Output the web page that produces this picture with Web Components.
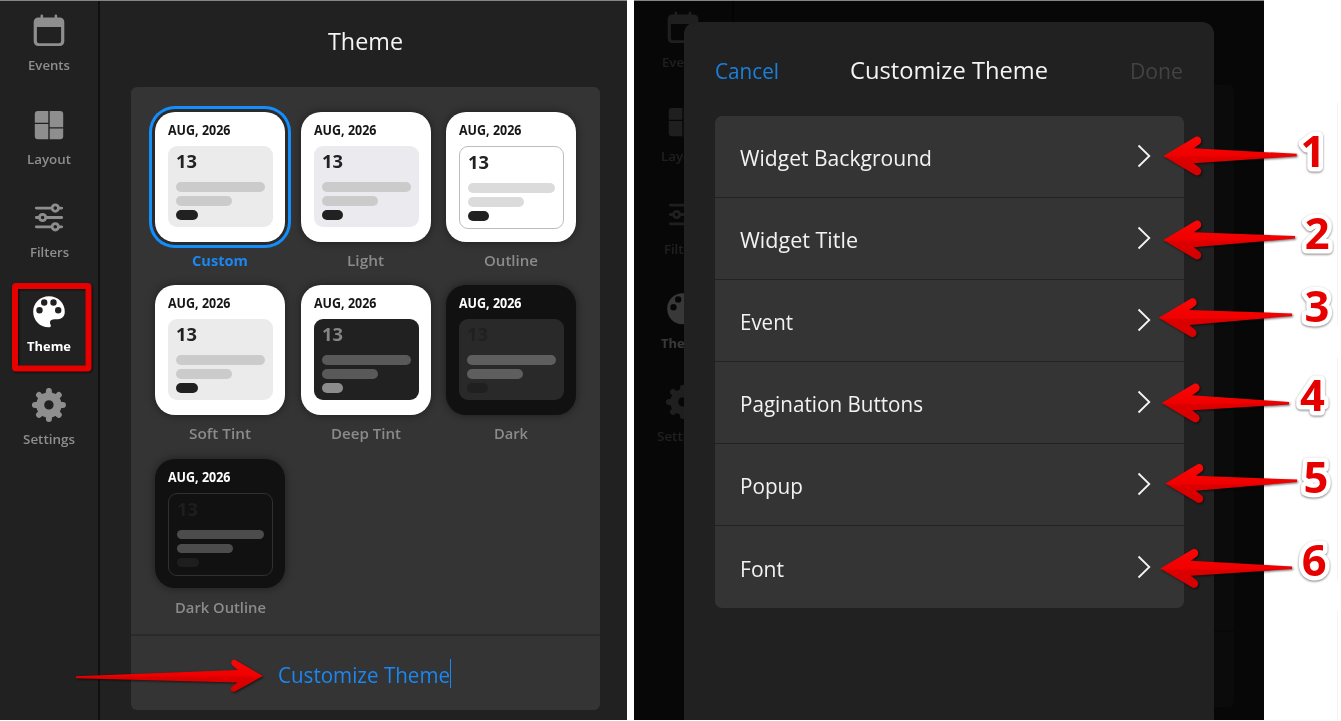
<!DOCTYPE html>
<html lang="en">
<head>
<meta charset="utf-8">
<title>Customize Theme</title>
<style>
  body {
    margin: 0;
    width: 1341px;
    height: 721px;
    overflow: hidden;
    background: #fff;
    font-family: "Open Sans", "Noto Sans", sans-serif;
  }
</style>
</head>
<body>
<guide-page></guide-page>

<script>
const ICONS = {
  events: `
    <path fill="currentColor" fill-rule="evenodd" d="M6.2 3.5H27.8a4.5 4.5 0 0 1 4.5 4.5V27.5a4.5 4.5 0 0 1-4.5 4.5H6.2a4.5 4.5 0 0 1-4.5-4.5V8a4.5 4.5 0 0 1 4.5-4.5zM4.9 12.9V27a2.2 2.2 0 0 0 2.2 2.2H26.9a2.2 2.2 0 0 0 2.2-2.2V12.9z"/>
    <path stroke="currentColor" stroke-width="2.6" stroke-linecap="round" d="M9.8 1.8V5M23.9 1.8V5"/>`,
  layout: `
    <g fill="currentColor">
      <path d="M5.8 3H16.3V14.8H2.8V6a3 3 0 0 1 3-3z"/>
      <path d="M2.8 16.1H16.3V31.2H5.8a3 3 0 0 1-3-3z"/>
      <path d="M17.7 3H28.2a3 3 0 0 1 3 3V19.2H17.7z"/>
      <path d="M17.7 20.5H31.2V28.2a3 3 0 0 1-3 3H17.7z"/>
    </g>`,
  filters: `
    <g fill="none" stroke="currentColor" stroke-width="2.8" stroke-linecap="round">
      <path d="M4.3 7.1H19.5M27 7.1H29.7M4.3 16.5H7M14 16.5H29.7M4.3 25.8H19.5M27 25.8H29.7"/>
      <circle cx="23.3" cy="7.1" r="3.2"/>
      <circle cx="10.6" cy="16.5" r="3.2"/>
      <circle cx="23.3" cy="25.8" r="3.2"/>
    </g>`,
  theme: `
    <path fill="currentColor" fill-rule="evenodd" d="M17 1.2C8 1.2 1.2 8 1.2 16.7S8 32.2 16.5 32.2c1.4 0 2.3-.3 2.4-1.2.1-1-1.2-2.2-.9-4 .3-1.800 2-2.8 4.5-2.8h3.3c3.8 0 7-2.8 7-7.5C32.8 8 26 1.2 17 1.2zM7.5 12a3.2 3.2 0 1 1 0 6.4 3.2 3.2 0 0 1 0-6.4zM12.2 4.3a3.2 3.2 0 1 1 0 6.4 3.2 3.2 0 0 1 0-6.4zM21.5 4.3a3.2 3.2 0 1 1 0 6.4 3.2 3.2 0 0 1 0-6.4zM26.2 12a3.2 3.2 0 1 1 0 6.4 3.2 3.2 0 0 1 0-6.4z"/>`,
  settings: `
    <g fill="none" stroke="currentColor" transform="translate(16.9 16.9)">
      <circle r="8.7" stroke-width="8"/>
      <path stroke-width="6" stroke-linecap="round" d="M0-11V-14M0 11V14M-11 0H-14M11 0H14M8-8L9.9-9.9M-8-8L-9.9-9.9M8 8L9.9 9.9M-8 8L-9.9 9.9"/>
    </g>`,
};

// Text squeezed or stretched to the width attribute
class FitText extends HTMLElement {
  constructor() {
    super();
    this.attachShadow({ mode: "open" });
    this.shadowRoot.innerHTML = `
      <style>
        :host { display: inline-block; white-space: nowrap; text-align: left; }
        span { display: inline-block; transform-origin: 0 50%; }
      </style>
      <span><slot></slot></span>`;
  }

  connectedCallback() {
    const width = Number(this.getAttribute("width"));
    const span = this.shadowRoot.querySelector("span");
    this.style.width = width + "px";
    const natural = span.getBoundingClientRect().width;
    if (natural) {
      span.style.transform = `scaleX(${width / natural})`;
    }
  }
}

class NavItem extends HTMLElement {
  constructor() {
    super();
    this.attachShadow({ mode: "open" });
  }

  connectedCallback() {
    this.shadowRoot.innerHTML = `
      <style>
        :host {
          display: flex;
          flex-direction: column;
          align-items: center;
          height: 93.6px;
          color: #8e8e8e;
          font-size: 13px;
          font-weight: 600;
          line-height: 20px;
        }
        :host([active]) { color: #fff; font-weight: 700; }
        svg { flex: none; width: 34px; height: 34px; margin-bottom: 7px; }
      </style>
      <svg viewBox="0 0 34 34">${ICONS[this.getAttribute("icon")]}</svg>
      <fit-text width="${this.getAttribute("width")}">${this.getAttribute("label")}</fit-text>`;
  }
}

class NavRail extends HTMLElement {
  constructor() {
    super();
    this.attachShadow({ mode: "open" });
    this.shadowRoot.innerHTML = `
      <style>
        :host {
          display: block;
          box-sizing: border-box;
          width: 100px;
          padding: 13px 0 0;
          border-right: 2px solid #101010;
        }
      </style>
      <nav-item icon="events" label="Events" width="42"></nav-item>
      <nav-item icon="layout" label="Layout" width="44"></nav-item>
      <nav-item icon="filters" label="Filters" width="39"></nav-item>
      <nav-item icon="theme" label="Theme" width="44" active></nav-item>
      <nav-item icon="settings" label="Settings" width="52"></nav-item>`;
  }
}

class ThemeTile extends HTMLElement {
  constructor() {
    super();
    this.attachShadow({ mode: "open" });
    this.shadowRoot.innerHTML = `
      <style>
        :host {
          --tile: #fff;
          --title: #161616;
          --box: #ebebeb;
          --edge: transparent;
          --day: #222;
          --bar: #cbcbcb;
          --pill: #212121;
          display: flex;
          flex-direction: column;
          align-items: center;
          width: 130px;
          color: #8b8b8b;
          font-size: 14.7px;
          font-weight: 600;
          line-height: 20px;
        }
        :host([kind="light"]) { --box: #ebebef; }
        :host([kind="outline"]) { --box: #fff; --edge: #bdbdbd; --bar: #dbdbdb; }
        :host([kind="deep"]) { --box: #212121; --day: #858585; --bar: #595959; --pill: #8c8c8c; }
        :host([kind="dark"]) { --tile: #111; --title: #fff; --box: #292929; --day: #202020; --bar: #5e5e5e; --pill: #202020; }
        :host([kind="dark-outline"]) { --tile: #111; --title: #fff; --box: #111; --edge: #303030; --day: #1e1e1e; --bar: #4c4c4c; --pill: #1e1e1e; }
        .tile {
          box-sizing: border-box;
          width: 130px;
          height: 129.5px;
          padding: 8px 12.5px 0 13px;
          border-radius: 20px;
          background: var(--tile);
          box-shadow: 0 0 8px rgba(0, 0, 0, .45);
        }
        :host([selected]) .tile { box-shadow: 0 0 0 3px #2b2b2b, 0 0 0 6px #158dfb; }
        .month { height: 26px; color: var(--title); font-size: 13.4px; font-weight: 700; line-height: 20px; }
        .box {
          box-sizing: border-box;
          width: 105px;
          height: 81px;
          padding: 4px 8px 0;
          border-radius: 9px;
          background: var(--box);
        }
        :host([kind$="outline"]) .box { height: 83px; border: 1px solid var(--edge); }
        .day { height: 32px; color: var(--day); font-size: 17.5px; font-weight: 700; line-height: 22px; }
        .bar { height: 9.5px; border-radius: 5px; background: var(--bar); margin-bottom: 4.5px; }
        .half { width: 56px; }
        .pill { width: 21.5px; background: var(--pill); }
        .label { margin-top: 8.5px; }
        :host([selected]) .label { color: #1a87f2; font-weight: 700; }
      </style>
      <div class="tile">
        <div class="month"><fit-text width="62.5">AUG, 2026</fit-text></div>
        <div class="box">
          <div class="day"><fit-text width="21">13</fit-text></div>
          <div class="bar"></div>
          <div class="bar half"></div>
          <div class="bar pill"></div>
        </div>
      </div>
      <div class="label"><slot></slot></div>`;
  }
}

class ThemePicker extends HTMLElement {
  constructor() {
    super();
    this.attachShadow({ mode: "open" });
    this.shadowRoot.innerHTML = `
      <style>
        :host { display: flex; flex-direction: column; flex: 1; padding: 23px 27px 10px 31px; }
        h1 { margin: 0; height: 63px; text-align: center; color: #f4f4f4; font-size: 23.5px; font-weight: 400; line-height: 35px; }
        .card {
          display: flex;
          flex-direction: column;
          flex: 1;
          border-radius: 6px;
          background: #343434;
        }
        .grid {
          display: grid;
          grid-template-columns: repeat(3, 130px);
          grid-auto-rows: 173.3px;
          column-gap: 15.3px;
          height: 522px;
          padding: 25px 0 0 24.3px;
        }
        .link {
          display: flex;
          align-items: center;
          justify-content: center;
          flex: 1;
          padding: 1px 2px 0 0;
          border-top: 2px solid #2a2a2a;
          color: #1a87f2;
          font-size: 22px;
        }
        .caret { width: 1px; height: 29px; background: #1a87f2; }
      </style>
      <h1><fit-text width="75">Theme</fit-text></h1>
      <div class="card">
        <div class="grid">
          <theme-tile selected><fit-text width="56">Custom</fit-text></theme-tile>
          <theme-tile kind="light"><fit-text width="37">Light</fit-text></theme-tile>
          <theme-tile kind="outline"><fit-text width="54">Outline</fit-text></theme-tile>
          <theme-tile><fit-text width="62">Soft Tint</fit-text></theme-tile>
          <theme-tile kind="deep"><fit-text width="70">Deep Tint</fit-text></theme-tile>
          <theme-tile kind="dark"><fit-text width="34">Dark</fit-text></theme-tile>
          <theme-tile kind="dark-outline"><fit-text width="91">Dark Outline</fit-text></theme-tile>
        </div>
        <div class="link"><fit-text width="172">Customize Theme</fit-text><span class="caret"></span></div>
      </div>`;
  }
}

class OptionRow extends HTMLElement {
  constructor() {
    super();
    this.attachShadow({ mode: "open" });
    this.shadowRoot.innerHTML = `
      <style>
        :host {
          display: flex;
          align-items: center;
          justify-content: space-between;
          box-sizing: border-box;
          height: 82.1px;
          padding: 2px 33px 0 24.5px;
          border-bottom: 1.5px solid #222;
          color: #f2f2f2;
          font-size: 22px;
          line-height: 30px;
        }
        :host(:last-of-type) { border-bottom-color: transparent; }
        svg { width: 14px; height: 24px; margin-bottom: 2px; }
      </style>
      <slot></slot>
      <svg viewBox="0 0 14 24"><path d="M1.5 1.5L12.3 12L1.5 22.5" fill="none" stroke="#f4f4f4" stroke-width="1.8"/></svg>`;
  }
}

class CustomizeSheet extends HTMLElement {
  constructor() {
    super();
    this.attachShadow({ mode: "open" });
    this.shadowRoot.innerHTML = `
      <style>
        :host {
          display: block;
          box-sizing: border-box;
          width: 530px;
          height: 698px;
          padding: 0 30px 0 31px;
          border-radius: 12px 12px 0 0;
          background: #212121;
        }
        header {
          display: flex;
          align-items: center;
          justify-content: space-between;
          height: 93.5px;
          padding: 0 1px 0 0;
          font-size: 22px;
        }
        header > * { margin-top: 3px; }
        .cancel { color: #1b80dc; }
        .title { margin-right: 11px; color: #f4f4f4; font-size: 23.5px; }
        .done { color: #434343; }
        .list { border-radius: 7px; background: #343434; overflow: hidden; }
      </style>
      <header>
        <fit-text class="cancel" width="64">Cancel</fit-text>
        <fit-text class="title" width="198">Customize Theme</fit-text>
        <fit-text class="done" width="53">Done</fit-text>
      </header>
      <div class="list">
        <option-row><fit-text width="192">Widget Background</fit-text></option-row>
        <option-row><fit-text width="118">Widget Title</fit-text></option-row>
        <option-row><fit-text width="53">Event</fit-text></option-row>
        <option-row><fit-text width="183">Pagination Buttons</fit-text></option-row>
        <option-row><fit-text width="63">Popup</fit-text></option-row>
        <option-row><fit-text width="44">Font</fit-text></option-row>
      </div>`;
  }
}

// Dimmed settings screen with the sheet lying over it
class SheetScreen extends HTMLElement {
  constructor() {
    super();
    this.attachShadow({ mode: "open" });
    this.shadowRoot.innerHTML = `
      <style>
        :host { display: block; position: relative; width: 630px; overflow: hidden; background: #212121; }
        .behind { display: flex; height: 100%; }
        nav-rail { height: 725px; margin-top: -3px; }
        .card { flex: 1; margin: 84px 30px 13px 31px; border-radius: 6px; background: #343434; }
        .card div { height: 545px; border-bottom: 2px solid #252525; }
        .shade { position: absolute; inset: 0; background: rgba(0, 0, 0, .78); }
        customize-sheet { position: absolute; left: 50px; top: 21px; }
      </style>
      <div class="behind">
        <nav-rail></nav-rail>
        <div class="card"><div></div></div>
      </div>
      <div class="shade"></div>
      <customize-sheet></customize-sheet>`;
  }
}

// Red arrows, step numbers and the highlight box drawn on top of both screens
class GuideMarks extends HTMLElement {
  constructor() {
    super();
    this.attachShadow({ mode: "open" });
    const steps = [
      // tip x, tip y, tail x, tail y, number x, number baseline
      [1163.3, 156, 1296.7, 155, 1313, 167],
      [1163.3, 240, 1295, 237.3, 1317.3, 249],
      [1158.7, 317.7, 1292, 314.6, 1317, 321.5],
      [1161.7, 403, 1289, 403.2, 1312.5, 411],
      [1165.3, 483.5, 1297, 480.8, 1316, 492.5],
      [1160.3, 568.5, 1292, 567.7, 1314.3, 576],
    ];
    this.shadowRoot.innerHTML = `
      <style>
        :host { display: block; position: absolute; left: 0; top: 0; }
        svg { display: block; }
        .arrow { filter: drop-shadow(1px 1.5px 1px rgba(0, 0, 0, .6)); }
        .number {
          font: 700 43.5px "Open Sans", "Noto Sans", sans-serif;
          text-anchor: middle;
          fill: #e60000;
          stroke: #fff;
          stroke-width: 9px;
          stroke-linejoin: round;
          paint-order: stroke;
          filter: drop-shadow(.5px 1px .8px rgba(0, 0, 0, .5));
        }
      </style>
      <svg width="1341" height="721" viewBox="0 0 1341 721">
        <defs>
          <linearGradient id="red" x1="0" y1="0" x2="0" y2="1">
            <stop offset="0" stop-color="#fb0606"/>
            <stop offset=".5" stop-color="#f00000"/>
            <stop offset=".55" stop-color="#dc0000"/>
            <stop offset="1" stop-color="#d40000"/>
          </linearGradient>
        </defs>
        <path d="M1337.500 103V325M1337.500 357V580M1337.500 611V720" stroke="#f3f3f3"/>
        <rect class="arrow" x="15" y="286" width="73.5" height="82.5" rx="1" fill="none" stroke="#e60000" stroke-width="6"/>
        <path class="arrow" fill="url(#red)" d="M263 676L235.5 691.3C231.5 693.3 229 689 232 686.500L237.500 682.500L76 678.300V676.200L237.500 670L232.500 665.500C229.500 662.500 232.500 658.500 235.800 660.300z"/>
        ${steps.map((s) => this._step(...s)).join("")}
      </svg>`;
    this.shadowRoot.querySelectorAll(".number").forEach((el, i) => {
      el.textContent = i + 1;
    });
  }

  _step(x, y, tailX, tailY, numX, numY) {
    return `
      <path class="arrow" fill="url(#red)" d="M${x} ${y}
        l32-19 c4.5-2 8 3.5 4.5 7 L${x + 30.5} ${y - 7.7}
        L${tailX} ${tailY - 1.2} V${tailY + 1.3}
        L${x + 30.5} ${y + 7.3} L${x + 36.5} ${y + 12} c3.5 3.5 0 9-4.5 7z"/>
      <text class="number" x="${numX}" y="${numY}"></text>`;
  }
}

class GuidePage extends HTMLElement {
  constructor() {
    super();
    this.attachShadow({ mode: "open" });
    this.shadowRoot.innerHTML = `
      <style>
        :host { display: block; position: relative; width: 1341px; height: 721px; }
        main { display: flex; gap: 7px; height: 720px; }
        .screen { display: flex; width: 627px; background: #212121; }
        .screen, sheet-screen { box-sizing: border-box; border-top: 1px solid #858585; }
      </style>
      <main>
        <div class="screen">
          <nav-rail></nav-rail>
          <theme-picker></theme-picker>
        </div>
        <sheet-screen></sheet-screen>
      </main>
      <guide-marks></guide-marks>`;
  }
}

customElements.define("fit-text", FitText);
customElements.define("nav-item", NavItem);
customElements.define("nav-rail", NavRail);
customElements.define("theme-tile", ThemeTile);
customElements.define("theme-picker", ThemePicker);
customElements.define("option-row", OptionRow);
customElements.define("customize-sheet", CustomizeSheet);
customElements.define("sheet-screen", SheetScreen);
customElements.define("guide-marks", GuideMarks);
customElements.define("guide-page", GuidePage);
</script>
</body>
</html>
